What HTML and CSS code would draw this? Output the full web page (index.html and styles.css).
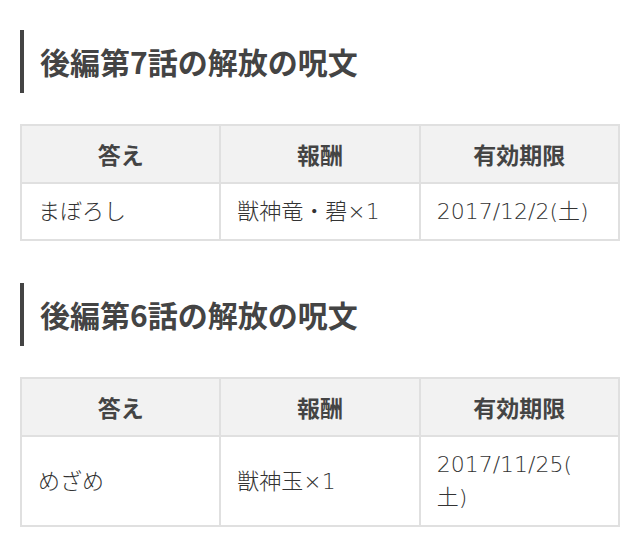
FILE: index.html
```html
<!DOCTYPE html>
<html lang="ja">
<head>
<meta charset="utf-8">
<link rel="stylesheet" href="styles.css">
</head>
<body>
<section class="block">
  <h2 class="title">後編第7話の解放の呪文</h2>
  <table class="spell">
    <thead>
      <tr><th>答え</th><th>報酬</th><th>有効期限</th></tr>
    </thead>
    <tbody>
      <tr><td>まぼろし</td><td>獣神竜・碧×1</td><td>2017/12/2(<wbr>土)</td></tr>
    </tbody>
  </table>
</section>
<section class="block">
  <h2 class="title">後編第6話の解放の呪文</h2>
  <table class="spell">
    <thead>
      <tr><th>答え</th><th>報酬</th><th>有効期限</th></tr>
    </thead>
    <tbody>
      <tr><td>めざめ</td><td>獣神玉×1</td><td>2017/11/25(<wbr>土)</td></tr>
    </tbody>
  </table>
</section>
</body>
</html>
```

FILE: styles.css
```css
html, body {
  margin: 0;
  padding: 0;
  background: #ffffff;
}
body {
  padding: 30px 20px 0 20px;
  font-family: "Noto Sans CJK JP", "Noto Sans", sans-serif;
  color: #444444;
}
.block {
  margin-bottom: 42px;
}
.title {
  margin: 0 0 31px 0;
  border-left: 4px solid #444444;
  padding: 9px 0 9px 16px;
  font-size: 30px;
  line-height: 45px;
  font-weight: bold;
  color: #444444;
}
.spell {
  width: 600px;
  border-collapse: collapse;
  table-layout: fixed;
  font-size: 22px;
  line-height: 33px;
}
.spell th,
.spell td {
  border: 2px solid #e0e0e0;
  padding: 11px 16px;
  word-break: break-all;
}
.spell th {
  background: #f2f2f2;
  font-weight: bold;
  text-align: center;
  color: #444444;
  font-size: 23px;
  line-height: 34px;
}
.spell td {
  text-align: left;
  font-family: "DejaVu Sans", "Noto Sans CJK JP", sans-serif;
  font-weight: 200;
  color: #333333;
}
```
